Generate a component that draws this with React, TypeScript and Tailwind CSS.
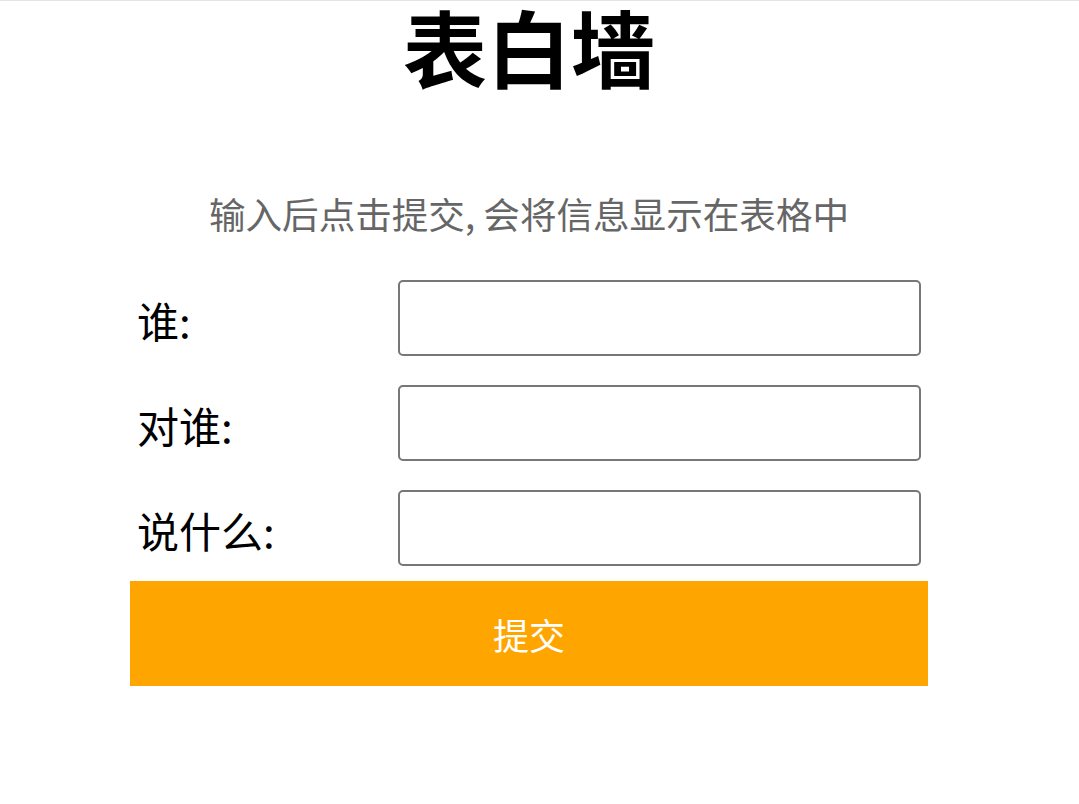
import { useState } from 'react';

const fields = [
  { key: 'from', label: '谁:' },
  { key: 'to', label: '对谁:' },
  { key: 'msg', label: '说什么:' },
];

export default function App() {
  const [values, setValues] = useState<Record<string, string>>({ from: '', to: '', msg: '' });

  return (
    <div
      className="min-h-screen bg-white border-t border-[#e3e5e8]"
      style={{ fontFamily: "'Noto Sans CJK SC', 'Noto Sans', sans-serif" }}
    >
      <div className="w-[798px] ml-[130px]">
        {/* Title */}
        <h1 className="text-[84px] font-bold leading-[90px] text-center text-black">表白墙</h1>

        <p className="text-[36.6px] leading-[37px] text-center text-[#666666] mt-[104px]">
          输入后点击提交, 会将信息显示在表格中
        </p>

        {/* Form rows */}
        <div className="mt-[48px] flex flex-col gap-[29px] px-[7px]">
          {fields.map((f) => (
            <div key={f.key} className="flex items-center">
              <span className="w-[261px] shrink-0 text-[42px] text-black leading-none pt-[4px]">{f.label}</span>
              <input
                className="w-[523px] h-[76px] border-2 border-[#777777] rounded-[5px] outline-none px-2 text-[24px]"
                value={values[f.key]}
                onChange={(e) => setValues({ ...values, [f.key]: e.target.value })}
              />
            </div>
          ))}
        </div>

        <button className="mt-[15px] w-full h-[105px] bg-[#ffa500] text-white text-[36px] leading-none">
          提交
        </button>
      </div>
    </div>
  );
}
